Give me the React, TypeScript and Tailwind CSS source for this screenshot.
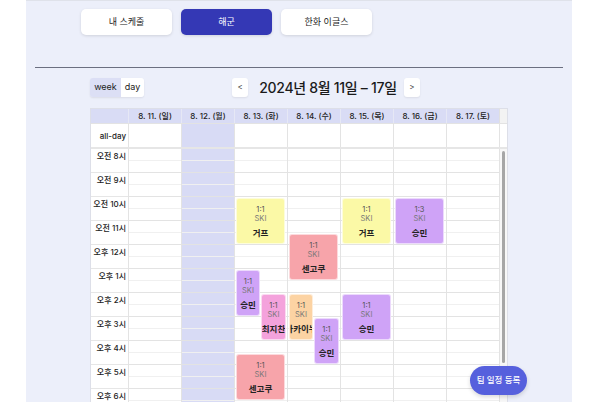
import React from 'react';

const days = ['8. 11. (일)', '8. 12. (월)', '8. 13. (화)', '8. 14. (수)', '8. 15. (목)', '8. 16. (금)', '8. 17. (토)'];
const hours = ['오전 8시', '오전 9시', '오전 10시', '오전 11시', '오후 12시', '오후 1시', '오후 2시', '오후 3시', '오후 4시', '오후 5시', '오후 6시', '오후 7시'];

const HOUR = 24;
const COL = 53;
const TIME_COL = 37;

interface CalEvent {
  day: number;
  start: number;
  end: number;
  half?: 0 | 1;
  label: string;
  name: string;
  color: string;
}

const events: CalEvent[] = [
  { day: 2, start: 10, end: 12, label: '1:1', name: '거프', color: 'bg-[#fbf9a6]' },
  { day: 4, start: 10, end: 12, label: '1:1', name: '거프', color: 'bg-[#fbf9a6]' },
  { day: 5, start: 10, end: 12, label: '1:3', name: '승민', color: 'bg-[#cfa3f7]' },
  { day: 3, start: 11.5, end: 13.5, label: '1:1', name: '센고쿠', color: 'bg-[#f7a4aa]' },
  { day: 2, start: 13, end: 15, half: 0, label: '1:1', name: '승민', color: 'bg-[#cfa3f7]' },
  { day: 2, start: 14, end: 16, half: 1, label: '1:1', name: '최지찬', color: 'bg-[#f4a2dc]' },
  { day: 3, start: 14, end: 16, half: 0, label: '1:1', name: '아카이누', color: 'bg-[#fcd3a3]' },
  { day: 3, start: 15, end: 17, half: 1, label: '1:1', name: '승민', color: 'bg-[#cfa3f7]' },
  { day: 4, start: 14, end: 16, label: '1:1', name: '승민', color: 'bg-[#cfa3f7]' },
  { day: 2, start: 16.5, end: 18.5, label: '1:1', name: '센고쿠', color: 'bg-[#f7a4aa]' },
];

const EventBox: React.FC<{ ev: CalEvent }> = ({ ev }) => {
  let left = TIME_COL + ev.day * COL + 2;
  let width = COL - 4;
  if (ev.half === 0) width = 24;
  if (ev.half === 1) {
    left = TIME_COL + ev.day * COL + 27;
    width = 25;
  }
  return (
    <div
      className={`absolute ${ev.color} rounded-[3px] border border-white/60 overflow-hidden flex flex-col items-center pt-[6px]`}
      style={{ left, width, top: (ev.start - 8) * HOUR + 1, height: (ev.end - ev.start) * HOUR - 2 }}
    >
      <div className="text-[7.5px] leading-[9px] text-[#555]">{ev.label}</div>
      <div className="text-[7.5px] leading-[9px] text-[#777]">SKI</div>
      <div className="mt-[4px] text-[8.5px] leading-[12px] font-bold text-[#222] whitespace-nowrap">{ev.name}</div>
    </div>
  );
};

export default function App() {
  return (
    <div className="w-[600px] h-[402px] overflow-hidden bg-white relative" style={{ fontFamily: 'Inter, "Noto Sans CJK KR", sans-serif' }}>
      <div className="ml-[26px] w-[546px] h-full bg-[#eceffa] border-t border-[#dfe2ea] pt-[8px]">
        <div className="flex ml-[55px] gap-[9px]">
          <button className="w-[91px] h-[26px] rounded-[5px] bg-white shadow-[0_1px_3px_rgba(0,0,0,0.12)] text-[9px] text-[#222]">내 스케줄</button>
          <button className="w-[91px] h-[26px] rounded-[5px] bg-[#3438b5] shadow-[0_1px_3px_rgba(0,0,0,0.12)] text-[9px] text-white">해군</button>
          <button className="w-[91px] h-[26px] rounded-[5px] bg-white shadow-[0_1px_3px_rgba(0,0,0,0.12)] text-[9px] text-[#222]">한화 이글스</button>
        </div>

        <div className="mx-[9px] mt-[32px] h-px bg-[#6b6f80]" />

        <div className="ml-[64px] w-[418px]">
          <div className="mt-[9px] flex items-center justify-between h-[20px]">
            <div className="flex h-[19px] rounded-[3px] overflow-hidden shadow-[0_1px_2px_rgba(0,0,0,0.08)] text-[9px] text-[#222]">
              <div className="w-[31px] bg-[#dcdff5] flex items-center justify-center">week</div>
              <div className="w-[23px] bg-white flex items-center justify-center">day</div>
            </div>
            <div className="flex items-center">
              <div className="w-[16px] h-[19px] bg-white rounded-[3px] shadow-[0_1px_2px_rgba(0,0,0,0.08)] flex items-center justify-center text-[8px] text-[#333]">&lt;</div>
              <div className="ml-[11px] mr-[7px] text-[14px] font-medium text-[#1a1a1a] tracking-[-0.3px]">2024년 8월 11일 – 17일</div>
              <div className="w-[16px] h-[19px] bg-white rounded-[3px] shadow-[0_1px_2px_rgba(0,0,0,0.08)] flex items-center justify-center text-[8px] text-[#333]">&gt;</div>
            </div>
            <div />
          </div>

          <div className="mt-[11px] border border-[#dddfe8] bg-white">
            <div className="flex h-[14px] bg-[#d9dcf5]">
              <div className="w-[37px] shrink-0" />
              {days.map((d) => (
                <div key={d} className="w-[53px] shrink-0 border-l border-[#e6e8f5] flex items-center justify-center text-[8px] font-medium text-[#222]">
                  {d}
                </div>
              ))}
              <div className="flex-1 bg-[#f3f3f3] border-l border-[#e0e0e0]" />
            </div>

            <div className="flex h-[24px] border-t border-[#e3e3e3]">
              <div className="w-[37px] shrink-0 flex items-center justify-end pr-[2px] text-[8px] font-medium text-[#222]">all-day</div>
              {days.map((d, i) => (
                <div key={d} className={`w-[53px] shrink-0 border-l border-[#e3e3e3] ${i === 1 ? 'bg-[#d8dbf5]' : ''}`} />
              ))}
              <div className="flex-1 border-l border-[#e3e3e3]" />
            </div>

            <div className="flex h-[260px] border-t-2 border-[#e6e6e6]">
              <div className="relative w-[408px] shrink-0">
                {hours.map((h) => (
                  <div key={h} className="flex h-[24px]">
                    <div className="w-[37px] shrink-0 h-full border-b border-[#e6e6e6]">
                      <div className="h-[13px] flex items-center justify-end pr-[2px] text-[8px] font-medium text-[#222] whitespace-nowrap">{h}</div>
                    </div>
                    {days.map((d, i) => (
                      <div key={d} className={`w-[53px] shrink-0 border-l border-[#e3e3e3] flex flex-col ${i === 1 ? 'bg-[#d8dbf5]' : ''}`}>
                        <div className="h-[12px] border-b border-[#f0f0f0]" />
                        <div className="h-[12px] border-b border-[#e3e3e3]" />
                      </div>
                    ))}
                  </div>
                ))}
                {events.map((ev, i) => (
                  <EventBox key={i} ev={ev} />
                ))}
              </div>
              <div className="flex-1 border-l border-[#e3e3e3] bg-[#f7f7f7] px-[2px] pt-[2px]">
                <div className="h-[212px] rounded-full bg-[#a6a6a6]" />
              </div>
            </div>
          </div>
        </div>
      </div>

      <button className="absolute left-[470px] top-[366px] w-[57px] h-[29px] rounded-full bg-[#5660dd] text-white text-[8.5px] font-medium shadow-[0_2px_4px_rgba(0,0,0,0.15)]">
        팀 일정 등록
      </button>
    </div>
  );
}
